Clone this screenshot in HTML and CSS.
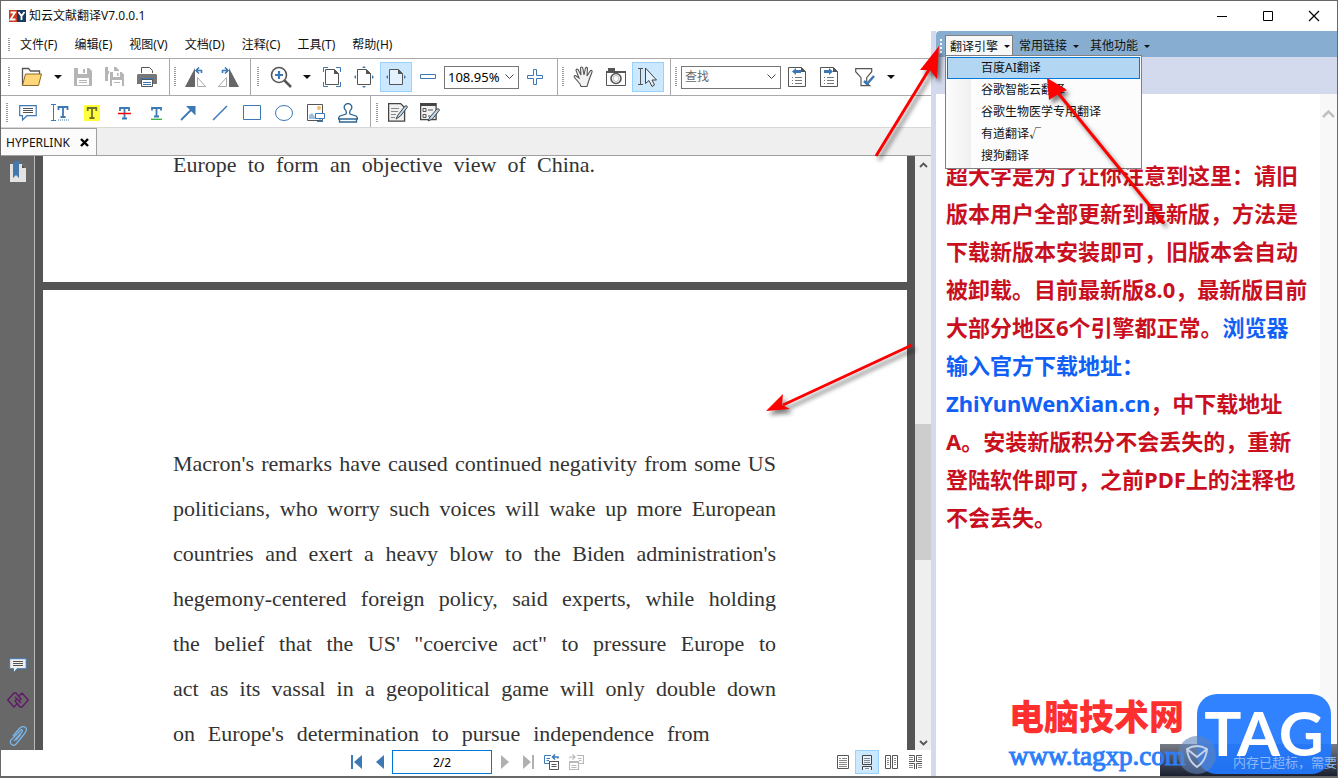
FILE: index.html
```html
<!DOCTYPE html>
<html lang="zh-CN">
<head>
<meta charset="utf-8">
<title>知云文献翻译V7.0.0.1</title>
<link rel="stylesheet" href="styles.css">
</head>
<body>
<div class="window">
  <header class="titlebar">
    <svg class="logo" width="17" height="14" viewBox="0 0 17 14"><path fill="#cf3a18" d="M0 1h8v12H0z"/><path fill="#183a63" d="M8 1h9v12H8z"/><path d="M1.500 3.500h4.500l-4.500 7h5M9.500 3l3 4 3-4M12.500 7v4" fill="none" stroke="#fff" stroke-width="1.800"/></svg>
    <h1>知云文献翻译V7.0.0.1</h1>
    <div class="caption">
      <button aria-label="最小化"><svg width="12" height="12"><path d="M1 6.500h10" stroke="#000"/></svg></button>
      <button aria-label="最大化"><svg width="12" height="12"><path d="M1.500 1.500h9v9h-9z" fill="none" stroke="#000"/></svg></button>
      <button aria-label="关闭"><svg width="12" height="12"><path d="M1 1l10 10M11 1L1 11" stroke="#000" stroke-width="1.200"/></svg></button>
    </div>
  </header>
  <div class="main">
    <section class="reader">
      <nav class="menubar">
        <span class="grip"></span>
        <button>文件(F)</button><button>编辑(E)</button><button>视图(V)</button><button>文档(D)</button><button>注释(C)</button><button>工具(T)</button><button>帮助(H)</button>
      </nav>
      <div class="toolbar">
        <div class="group">
          <span class="grip"></span>
          <button class="tool" aria-label="打开"><svg width="22" height="20" viewBox="0 0 22 20"><path d="M1.500 18.500v-17h6l2 2.500h9v3" fill="#fff" stroke="#555" stroke-width="1.300"/><path d="M1.500 18.500L4.500 7h16l-3 11.500z" fill="#ffd678" stroke="#8a6a2a"/></svg></button>
          <button class="drop" aria-label="打开选项"></button>
          <button class="tool" aria-label="保存"><svg width="18" height="20" viewBox="0 0 18 20"><path fill="#b5b5b5" d="M0 1h15l3 3v15H0z"/><path fill="#fff" d="M4 1h9v6H4zM3 11h12v7H3z"/><path fill="#b5b5b5" d="M9 2h2v4H9zM5 13h8v1H5zM5 15h8v1H5z"/></svg></button>
          <button class="tool" aria-label="全部保存"><svg width="20" height="20" viewBox="0 0 20 20"><path fill="#b5b5b5" d="M0 0h11l3 3v11H0z"/><path fill="#fff" d="M3 0h6v4H3zM3 7h8v7H3z"/><path fill="#b5b5b5" stroke="#fff" d="M4.500 4.500h12l3 3v12h-15z"/><path fill="#fff" d="M8 5h7v5H8zM7 13h10v6H7z"/><path fill="#b5b5b5" d="M12 6h1.500v3H12zM9 15h6v1H9z"/></svg></button>
          <button class="tool" aria-label="打印"><svg width="20" height="20" viewBox="0 0 20 20"><path d="M4.500 6V.5h8l3 3V6" fill="#fff" stroke="#555"/><path fill="#777" d="M1 7h18l1 1v9H0V8z"/><path fill="#3c78b4" d="M3 11h14v1H3z"/><path d="M4.500 12.500h11v7h-11z" fill="#fff" stroke="#555"/><path d="M6 15.500h8M6 17.500h8" stroke="#3c78b4"/></svg></button>
        </div>
        <div class="group tight">
          <span class="grip"></span>
          <button class="tool" aria-label="向左旋转"><svg width="22" height="20" viewBox="0 0 22 20"><path fill="#666" d="M0 20L10 1v19z"/><path d="M12.500 19.500v-9l8 9z" fill="#fff" stroke="#aaa"/><path d="M16.500 6V3.500H12M14 .5l-3 3 3 3" fill="none" stroke="#3c78b4" stroke-width="1.600"/></svg></button>
          <button class="tool" aria-label="向右旋转"><svg width="22" height="20" viewBox="0 0 22 20"><path fill="#666" d="M22 20L12 1v19z"/><path d="M9.500 19.500v-9l-8 9z" fill="#fff" stroke="#aaa"/><path d="M5.500 6V3.500H10M8 .5l3 3-3 3" fill="none" stroke="#3c78b4" stroke-width="1.600"/></svg></button>
        </div>
        <div class="group zoom">
          <span class="grip"></span>
          <button class="tool" aria-label="放大工具"><svg width="22" height="22" viewBox="0 0 22 22"><circle cx="9" cy="9" r="7.500" fill="#fff" stroke="#555" stroke-width="1.600"/><path d="M9 5v8M5 9h8" stroke="#3c78b4" stroke-width="2.200"/><path d="M14.500 14.500L21 21" stroke="#555" stroke-width="2.500"/></svg></button>
          <button class="drop" aria-label="缩放选项"></button>
          <button class="tool" aria-label="适合页面"><svg width="18" height="20" viewBox="0 0 18 20"><path d="M.5 5V.5H5M13 .5h4.500V5M.5 15v4.500H5M13 19.500h4.500V15" fill="none" stroke="#3c78b4"/><path d="M2.500 2.500h9l4 4v11h-13z" fill="#fff" stroke="#555"/><path fill="#555" d="M11 2l5 5h-5z"/></svg></button>
          <button class="tool" aria-label="实际大小"><svg width="20" height="22" viewBox="0 0 20 22"><path d="M3.500 3.500h9l4 4v11h-13z" fill="#fff" stroke="#555"/><path fill="#555" d="M12 3l5 5h-5z"/><path fill="#3c78b4" d="M8 2l2-2 2 2zM8 20l2 2 2-2zM2 9l-2 2 2 2zM18 9l2 2-2 2z"/></svg></button>
          <button class="tool on" aria-label="适合宽度"><svg width="20" height="18" viewBox="0 0 20 18"><path d="M3.500 1.500h9l4 4v11h-13z" fill="#e4f2ff" stroke="#555"/><path fill="#555" d="M12 1l5 5h-5z"/><path fill="#3c78b4" d="M2 7L0 9l2 2zM18 7l2 2-2 2z"/></svg></button>
          <button class="tool" aria-label="缩小"><svg width="16" height="6"><path d="M.5.5h15v4H.5z" fill="#fff" stroke="#3c78b4"/></svg></button>
          <label class="combo zoombox"><input aria-label="缩放比例" value="108.95%"><svg width="9" height="6"><path d="M.5.5l4 4 4-4" fill="none" stroke="#444"/></svg></label>
          <button class="tool" aria-label="放大"><svg width="16" height="16"><path d="M6.500.5h3v6h6v3h-6v6h-3v-6h-6v-3h6z" fill="#fff" stroke="#3c78b4"/></svg></button>
        </div>
        <div class="group tight">
          <span class="grip"></span>
          <button class="tool" aria-label="手形工具"><svg width="22" height="22" viewBox="0 0 22 22"><path d="M7 18L1.500 11.500q-1-2 1-2L6 12 3 4.500q0-2 2-1L8 9 7.500 2q1-2 2.300 0L11 9l1.500-7q1.500-1.500 2 .5L14 10l3.500-5.500q2-.5 1.500 1.500l-3 8-2 6.500H8z" fill="#f2f2f2" stroke="#555" stroke-width="1.100"/></svg></button>
          <button class="tool" aria-label="快照"><svg width="20" height="18" viewBox="0 0 20 18"><path d="M.5 3.500h19v14H.5z" fill="#fff" stroke="#555"/><path fill="#555" d="M2 0h7v3H2zM0 3h20v2H0z"/><circle cx="10" cy="10.500" r="5" fill="#fff" stroke="#555" stroke-width="1.600"/><circle cx="10" cy="10.500" r="3" fill="none" stroke="#bbb"/></svg></button>
          <button class="tool on" aria-label="选择文本"><svg width="20" height="20" viewBox="0 0 20 20"><path d="M0 1.500h5M0 17.500h5M2.500 1.500v16" stroke="#555" fill="none"/><path d="M7.500 1v15.500l3.500-3 3 6 2.500-1.500-2.500-5h4.500z" fill="#e4f2ff" stroke="#444"/></svg></button>
        </div>
        <div class="group tight last">
          <span class="grip"></span>
          <label class="combo findbox"><input aria-label="查找" placeholder="查找"><svg width="9" height="6"><path d="M.5.5l4 4 4-4" fill="none" stroke="#444"/></svg></label>
          <button class="tool" aria-label="查找上一个"><svg width="18" height="20" viewBox="0 0 18 20"><path d="M.5.5h13l4 4v15H.5z" fill="#fff" stroke="#555"/><path fill="#555" d="M13 0l5 5h-5z"/><path d="M4 10.500h1M7 10.500h7M4 13.500h1M7 13.500h7M4 16.500h1M7 16.500h7" stroke="#777"/><path fill="#3c78b4" d="M4 4.500L8 1v2h5v3H8v2z"/></svg></button>
          <button class="tool" aria-label="查找下一个"><svg width="18" height="20" viewBox="0 0 18 20"><path d="M.5.5h13l4 4v15H.5z" fill="#fff" stroke="#555"/><path fill="#555" d="M13 0l5 5h-5z"/><path d="M4 10.500h1M7 10.500h7M4 13.500h1M7 13.500h7M4 16.500h1M7 16.500h7" stroke="#777"/><path fill="#3c78b4" d="M13 4.500L9 1v2H4v3h5v2z"/></svg></button>
          <button class="tool filter" aria-label="筛选"><svg width="20" height="19" viewBox="0 0 20 19"><path d="M.7.700h16v3l-5 6v5.500l3 2.500H6V9.700l-5.300-6z" fill="#fff" stroke="#555" stroke-width="1.200"/><path d="M9 13l3 3 7-8" fill="none" stroke="#3c78b4" stroke-width="2.500"/></svg></button>
          <button class="drop" aria-label="筛选选项"></button>
        </div>
      </div>
      <div class="toolbar notes">
        <div class="group">
          <span class="grip"></span>
          <button class="tool" aria-label="批注"><svg width="18" height="16" viewBox="0 0 18 16"><path d="M.7.700h16.500v10H8L3.500 15v-4.300H.7z" fill="#fff" stroke="#3c78b4" stroke-width="1.200"/><path d="M4 3.500h10M4 5.500h10M4 7.500h10" stroke="#555"/></svg></button>
          <button class="tool" aria-label="文本框"><svg width="18" height="17" viewBox="0 0 18 17"><path d="M0 .5h5M0 16.500h5M2.500.5v16" stroke="#3c78b4" fill="none"/><path d="M7.500 6V3h9v3M12 3v10M9.500 13h5" stroke="#3c78b4" stroke-width="1.800" fill="none"/><path d="M7 16h11" stroke="#3c78b4" stroke-dasharray="1 1"/></svg></button>
          <button class="tool" aria-label="高亮"><svg width="16" height="16" viewBox="0 0 16 16"><path fill="#ffff3c" d="M0 0h16v16H0z"/><path d="M3.700 6V3h8.600v3M8 3v10M5.500 13h5" stroke="#6a7230" stroke-width="1.800" fill="none"/></svg></button>
          <button class="tool" aria-label="删除线"><svg width="13" height="14" viewBox="0 0 13 14"><path d="M2 5V2h9v3M6.500 2v11M4 12.500h5" stroke="#3c78b4" stroke-width="1.800" fill="none"/><path d="M0 7.500h13" stroke="#f00" stroke-width="1.500"/></svg></button>
          <button class="tool" aria-label="下划线"><svg width="13" height="14" viewBox="0 0 13 14"><path d="M2 4.500V2h9v2.500M6.500 2v9M4 10.500h5" stroke="#3c78b4" stroke-width="1.800" fill="none"/><path d="M1 13.300h11" stroke="#2fae3e" stroke-width="1.300"/></svg></button>
          <button class="tool" aria-label="箭头"><svg width="16" height="16" viewBox="0 0 16 16"><path d="M1 15L13 3" stroke="#3c78b4" stroke-width="1.800"/><path fill="#3c78b4" d="M6 1h9.500v9.500z"/></svg></button>
          <button class="tool" aria-label="直线"><svg width="16" height="16"><path d="M1 15L15 1" stroke="#3c78b4" stroke-width="1.500"/></svg></button>
          <button class="tool" aria-label="矩形"><svg width="18" height="15"><path d="M.5.5h17v14H.5z" fill="#fff" stroke="#3c78b4"/></svg></button>
          <button class="tool" aria-label="椭圆"><svg width="18" height="16"><ellipse cx="9" cy="8" rx="8.500" ry="7.500" fill="#fff" stroke="#3c78b4"/></svg></button>
          <button class="tool" aria-label="图像"><svg width="18" height="18" viewBox="0 0 18 18"><path d="M.5.5h15v16H.5z" fill="#fff" stroke="#555"/><circle cx="12" cy="4" r="2" fill="#f3bd6b"/><path fill="#9fc0dd" d="M2 15V11l3-2 5 6z"/><path d="M8.500 9.500h9v5h-9zM10 17.500h6M13 14.500v3" fill="#fff" stroke="#3c78b4"/></svg></button>
          <button class="tool" aria-label="图章"><svg width="20" height="20" viewBox="0 0 20 20"><path d="M8 11Q9 8 7 6.500a3.700 3.700 0 1 1 6 0q-2 1.500-1 4.500l6 2q1.500 1 1.500 3H.500q0-2 1.500-3zM1.500 16v3h17v-3" fill="#fff" stroke="#2d6592" stroke-width="1.300"/></svg></button>
        </div>
        <div class="group tight last">
          <span class="grip"></span>
          <button class="tool" aria-label="编辑内容"><svg width="20" height="19" viewBox="0 0 20 19"><path d="M.6.600h12l4 4v13.500H.6z" fill="#f1f1f1" stroke="#444" stroke-width="1.300"/><path d="M3 5.500h8M3 8.500h7M3 11.500h5M3 14.500h4" stroke="#888"/><path d="M8 16l2-4 7-9q2-1 2.500 1l-7 9z" fill="#bcd8ee" stroke="#444"/></svg></button>
          <button class="tool" aria-label="编辑表单"><svg width="20" height="20" viewBox="0 0 20 20"><path d="M.6.600h15.500v16H.6z" fill="#f1f1f1" stroke="#444" stroke-width="1.300"/><path d="M0 2h16" stroke="#444" stroke-width="2"/><path d="M3 5.500h3v3H3zM3 11.500h3v3H3zM8 7h5M8 13h2" fill="none" stroke="#555"/><path d="M8 18l2-4 7-8q2-1 2.500 1l-7 9z" fill="#bcd8ee" stroke="#444"/></svg></button>
        </div>
      </div>
      <div class="tabs"><div class="tab"><span>HYPERLINK</span><button aria-label="关闭标签"><svg width="9" height="9"><path d="M1 1l7 7M8 1L1 8" stroke="#000" stroke-width="2.400"/></svg></button></div></div>
      <div class="workspace">
        <aside class="side">
          <button aria-label="书签"><svg width="18" height="22" viewBox="0 0 18 22"><path d="M1 3h12l4 4v14H1z" fill="#e3e3e3"/><path fill="#555" d="M13 3l4 4h-4z"/><path fill="#4579ad" d="M4 2l2-2h6l-2 2v15l-3-3-3 3z"/></svg></button>
          <div class="side-bottom">
            <button aria-label="批注列表"><svg width="18" height="16" viewBox="0 0 18 16"><path d="M.7.700h16.500v10H8L4.500 15v-4.300H.7z" fill="#eee" stroke="#3c78b4"/><path d="M4 3.500h10M4 5.500h10M4 7.500h10" stroke="#555"/></svg></button>
            <button aria-label="超链接"><svg width="22" height="16" viewBox="0 0 22 16"><path d="M11 11L7 15 .700 8 7 1h2l5 6-2 2-4-4M11 5l4-4 6.300 7-6.300 7h-2L8 9l2-2 4 4" fill="none" stroke="#601a68" stroke-width="1.400"/></svg></button>
            <button aria-label="附件"><svg width="18" height="20" viewBox="0 0 18 20"><path d="M5 15l8-9q1-2-.500-2.500L4 12q-4 3-2 6 3 3 6-1l8-10q3-4 0-6-3-1.500-6 2l-6 7M7 14l5-6" fill="none" stroke="#79b5e8" stroke-width="1.300"/></svg></button>
          </div>
        </aside>
        <div class="document">
          <article class="page first"><p class="row short">Europe to form an objective view of China.</p></article>
          <article class="page">
            <p class="row">Macron's remarks have caused continued negativity from some US</p>
            <p class="row">politicians, who worry such voices will wake up more European</p>
            <p class="row">countries and exert a heavy blow to the Biden administration's</p>
            <p class="row">hegemony-centered foreign policy, said experts, while holding</p>
            <p class="row">the belief that the US' "coercive act" to pressure Europe to</p>
            <p class="row">act as its vassal in a geopolitical game will only double down</p>
            <p class="row tail">on Europe's determination to pursue independence from</p>
          </article>
        </div>
        <div class="scroll">
          <svg width="9" height="6"><path d="M1 5l3.500-3.500L8 5" fill="none" stroke="#555" stroke-width="1.800"/></svg>
          <div class="track"><div class="thumb"></div></div>
          <svg width="9" height="6"><path d="M1 1l3.500 3.500L8 1" fill="none" stroke="#555" stroke-width="1.800"/></svg>
        </div>
        <svg class="arrow a3" width="160" height="84" viewBox="0 0 160 84"><path d="M149 5L20 65" stroke="red" stroke-width="3"/><path fill="red" d="M3 71L20 54 19 65 27 69z"/></svg>
      </div>
      <footer class="status">
        <div class="pager">
          <button aria-label="第一页"><svg width="12" height="14"><path fill="#3c78b4" d="M0 0h2v14H0zM11 0v14L3 7z"/></svg></button>
          <button aria-label="上一页"><svg width="8" height="14"><path fill="#3c78b4" d="M8 0v14L0 7z"/></svg></button>
          <input aria-label="页码" value="2/2">
          <button aria-label="下一页"><svg width="8" height="14"><path fill="#b0b0b0" d="M0 0v14l8-7z"/></svg></button>
          <button aria-label="最后一页"><svg width="12" height="14"><path fill="#b0b0b0" d="M10 0h2v14h-2zM1 0v14l8-7z"/></svg></button>
          <button aria-label="后退"><svg width="15" height="16" viewBox="0 0 15 16"><path d="M7 1.500H.5v8H5M2.500 4.500H6M2.500 6.500H5" fill="none" stroke="#3c78b4"/><path d="M5.500 7.500h9v8h-9z" fill="#fff" stroke="#555"/><path d="M5 7.500h10M7.500 10.500h5M7.500 12.500h5" stroke="#555"/><path d="M14 4.500V3H9M11 .5L8.500 3 11 5.500" fill="none" stroke="#3c78b4" stroke-width="1.500"/></svg></button>
          <button aria-label="前进"><svg width="15" height="16" viewBox="0 0 15 16"><path d="M8 1.500h6.500v8H10M9 4.500h3.500M10 6.500h2.500M.5 7.500h9v8h-9zM0 8.500h10M2.500 11.500h5M2.500 13.500h5M1 4.500V3h5M3.500.5L6 3 3.500 5.500" fill="none" stroke="#b8b8b8" stroke-width="1.200"/></svg></button>
        </div>
        <div class="views">
          <button aria-label="单页"><svg width="12" height="14"><path d="M.5.5h11v13H.5z" fill="#fff" stroke="#555"/><path d="M2 3.500h2M5 3.500h5M2 5.500h8M2 7.500h8M2 9.500h8M2 11.500h8" stroke="#888"/></svg></button>
          <button class="on" aria-label="连续"><svg width="12" height="15"><path d="M1.500.5h9v9h-9zM1.500 15v-3.500h9V15" fill="#e4f2ff" stroke="#444"/><path d="M3 3.500h6M3 5.500h6M3 7.500h6M4 13.500h4" stroke="#888"/></svg></button>
          <button aria-label="双页"><svg width="13" height="14"><path d="M.5.5h5v13h-5zM7.500.5h5v13h-5z" fill="#fff" stroke="#555"/><path d="M2 3.500h2M2 5.500h2M2 7.500h2M2 9.500h2M9 3.500h2M9 5.500h2M9 7.500h2M9 9.500h2" stroke="#888"/></svg></button>
          <button aria-label="双页连续"><svg width="13" height="14"><path d="M0 .5h5.500v6H0M13 .5H7.500v6H13M0 8.500h5.500V14M13 8.500H7.500V14" fill="none" stroke="#555"/><path d="M0 2.500h4M0 4.500h4M9 2.500h4M9 4.500h4M0 10.500h4M0 12.500h4M9 10.500h4M9 12.500h4" stroke="#888"/></svg></button>
        </div>
      </footer>
    </section>
    <section class="translator">
      <nav class="engines">
        <span class="grip light"></span>
        <button class="engine open">翻译引擎</button><button class="engine">常用链接</button><button class="engine">其他功能</button>
      </nav>
      <div class="band"></div>
      <div class="result">
        <p class="notice">超大字是为了让你注意到这里：请旧<br>版本用户全部更新到最新版，方法是<br>下载新版本安装即可，旧版本会自动<br>被卸载。目前最新版8.0，最新版目前<br>大部分地区6个引擎都正常。<a href="#">浏览器<br>输入官方下载地址：<br>ZhiYunWenXian.cn</a>，中下载地址<br>A。安装新版积分不会丢失的，重新<br>登陆软件即可，之前PDF上的注释也<br>不会丢失。</p>
        <div class="gutter"><svg width="13" height="9"><path d="M1 8l5.500-5.500L12 8" fill="none" stroke="#c0c0c0" stroke-width="2.500"/></svg></div>
      </div>
      <div class="menu">
        <button class="sel">百度AI翻译</button><button>谷歌智能云翻译</button><button>谷歌生物医学专用翻译</button><button>有道翻译√</button><button>搜狗翻译</button>
      </div>
      <svg class="arrow a1" width="80" height="120" viewBox="0 0 80 120"><path d="M6 116L60 28" stroke="red" stroke-width="3"/><path fill="red" d="M69 6L67 39 60 30 50 30z"/></svg>
      <svg class="arrow a2" width="130" height="156" viewBox="0 0 130 156"><path d="M122 150L16 20" stroke="red" stroke-width="3"/><path fill="red" d="M5 5L25 17 18 20 7 27z"/></svg>
    </section>
  </div>
  <div class="watermark">
    <div class="shade"></div>
    <div class="site"><strong>电脑技术网</strong><span>www.tagxp.com</span></div>
    <div class="tag">TAG</div>
    <div class="toast"><svg width="40" height="42" viewBox="0 0 40 42"><circle cx="20" cy="21" r="19" fill="#5f83bd" opacity="0.6"/><path d="M10 15q10-6 20 0-1 12-10 18Q11 27 10 15zM10 15l10 8 10-8" fill="none" stroke="#c5d3ea" stroke-width="2"/></svg><span>内存已超标，需要</span></div>
  </div>
</div>
</body>
</html>
```
FILE: styles.css
```css
* { box-sizing: border-box; }
body {
  margin: 0;
  font: 12px/16px "Noto Sans", "Noto Sans CJK SC", sans-serif;
  color: #111;
}
button {
  display: flex;
  align-items: center;
  justify-content: center;
  padding: 0;
  border: 0;
  background: none;
  font: inherit;
  color: inherit;
}
input { font: inherit; min-width: 0; outline: 0; }
svg { flex: none; display: block; }
p, h1 { margin: 0; }

.window {
  position: relative;
  display: flex;
  flex-direction: column;
  height: 100vh;
  overflow: hidden;
  border: 1px solid #686868;
  border-bottom-width: 2px;
  background: #fff;
}
.titlebar { display: flex; align-items: center; height: 30px; padding-left: 8px; gap: 3px; flex: none; }
.titlebar h1 { flex: 1; font-size: 12px; font-weight: 400; }
.caption { display: flex; height: 100%; }
.caption button { width: 46px; }

.main { display: flex; flex: 1; min-height: 0; }
.reader { display: flex; flex-direction: column; flex: 1; min-width: 0; }

.grip { flex: none; width: 15px; align-self: stretch; display: flex; align-items: center; justify-content: center; }
.grip::before {
  content: "";
  width: 2px;
  height: 20px;
  background: repeating-linear-gradient(#9a9a9a 0 1px, #fff 1px 2px);
}
.menubar { display: flex; align-items: center; gap: 17px; height: 28px; flex: none; border-bottom: 1px solid #a9a9ae; }
.menubar .grip { margin-right: -13px; }
.menubar .grip::before { height: 14px; }

.toolbar { display: flex; flex: none; height: 37px; border-bottom: 1px solid #a9a9ae; }
.group { display: flex; align-items: center; padding-right: 6px; border-right: 1px solid #a9a9ae; }
.group.tight .grip { width: 10px; }
.group.zoom .grip { width: 14px; }
.group.last { border-right: 0; }
.tool { width: 32px; height: 30px; border: 1px solid transparent; }
.tool.on, .views .on { border-color: #99d1ff; background: #cce8ff; }
.filter { margin-left: 4px; }
.drop { width: 19px; height: 30px; }
.drop::before, .engine::after {
  content: "";
  border: 4px solid transparent;
  border-top-color: #111;
  border-bottom: 0;
}
.combo { display: flex; align-items: center; height: 23px; padding: 0 4px 0 3px; border: 1px solid #767676; }
.combo input { flex: 1; width: 0; padding: 0; border: 0; background: none; }
.combo input::placeholder { color: #666; }
.zoombox { width: 75px; font-size: 13px; }
.findbox { width: 100px; }
.notes { height: 32px; border-bottom-color: #d8d8d8; }
.notes .group { padding-top: 2px; }
.notes .grip { width: 11px; }
.notes .group.last .grip { width: 11px; }

.tabs { flex: none; display: flex; height: 28px; background: #efefef; border-bottom: 1px solid #a0a0a0; }
.tab { display: flex; align-items: center; gap: 10px; padding: 1px 7px 0 5px; background: #fbfbfb; border: 1px solid #a0a0a0; border-width: 1px 1px 0 0; }

.workspace { position: relative; display: flex; flex: 1; min-height: 0; background: #555; }
.side { display: flex; flex-direction: column; justify-content: space-between; width: 34px; padding: 5px 0 4px; background: #686868; border-right: 1px solid #bbb; }
.side-bottom { display: flex; flex-direction: column; gap: 18px; }
.side button { width: 100%; }
.document { flex: 1; display: flex; flex-direction: column; gap: 8px; margin: 0 8px; min-width: 0; overflow: hidden; }
.page { flex: 1 0 auto; padding: 151px 131px 0 130px; background: #fff; }
.page.first { flex: none; height: 126px; padding-top: 0; }
.row {
  height: 45px;
  font: 22px/45px "Liberation Serif", serif;
  color: #333;
  white-space: nowrap;
  text-align-last: justify;
}
.row.tail { width: 89%; }
.row.short { width: 70%; height: 18px; line-height: 18px; }
.scroll { width: 16px; display: flex; flex-direction: column; align-items: center; justify-content: space-between; padding: 6px 0 4px; background: #efefef; }
.track { flex: 1; width: 100%; padding-top: 256px; }
.thumb { height: 136px; background: #cdcdcd; }

.status { display: flex; justify-content: space-between; flex: none; height: 26px; padding: 0 4px 2px 349px; }
.pager { display: flex; align-items: center; gap: 10px; }
.pager button { min-width: 13px; }
.pager input { width: 100px; height: 24px; margin: 0 -4px; border: 1px solid #0078d7; text-align: center; padding: 0; }
.views { display: flex; }
.views button { width: 24px; border: 1px solid transparent; }

.translator { position: relative; display: flex; flex-direction: column; flex: 0 0 406px; border-left: 5px solid #d4daee; }
.engines { display: flex; align-items: center; flex: none; height: 26px; padding-top: 4px; background: #87aed0; border-radius: 4px 0 0 0; }
.grip.light { width: 9px; }
.grip.light::before { height: 15px; background: repeating-linear-gradient(#fff 0 2px, #87aed0 2px 4px); }
.engine { gap: 6px; height: 22px; padding: 0 4px 0 5px; border: 1px solid transparent; white-space: nowrap; }
.engine.open { padding: 0 2px 0 4px; background: #f8f8f8; border-color: #808080; border-bottom: 0; }
.engine::after { border-width: 3px 3px 0; }
.band { flex: none; height: 37px; background: #d4daee; }
.result { display: flex; flex: 1; min-height: 0; justify-content: space-between; }
.notice { padding: 62px 0 0 10px; font-size: 22px; font-weight: 700; line-height: 38px; color: #c9101f; white-space: nowrap; }
.notice a { color: #1060f5; text-decoration: none; }
.gutter { width: 17px; padding: 15px 2px; background: #f8f8f8; }
.menu { position: absolute; left: 9px; top: 24px; width: 197px; padding: 1px; border: 1px solid #808080; background: linear-gradient(90deg, #fcfcfc, #f0f0f0 25px, #fcfcfc 25px); }
.menu button { width: 100%; height: 22px; padding-left: 33px; justify-content: flex-start; border: 1px solid transparent; }
.menu .sel { background: #b3d7f3; border-color: #0078d7; }

.arrow { position: absolute; overflow: visible; filter: drop-shadow(3px 4px 2px rgba(0, 0, 0, 0.5)); }
.a1 { left: -66px; top: 9px; }
.a2 { left: 106px; top: 42px; }
.a3 { right: 8px; top: 184px; }

.watermark { position: absolute; right: 0; bottom: 0; width: 330px; height: 84px; pointer-events: none; }
.shade { position: absolute; right: 0; bottom: 0; width: 177px; height: 32px; background: linear-gradient(#777b86, #1a2030); }
.site { position: absolute; left: 2px; bottom: 0; display: flex; flex-direction: column; }
.site strong { font: 900 35px/43px "Noto Sans CJK SC", sans-serif; color: #fd302f; }
.site span { font: 27px/40px "Liberation Serif", serif; color: #2d7ff9; -webkit-text-stroke: 1px #2d7ff9; }
.tag { position: absolute; right: 6px; top: 2px; width: 134px; height: 80px; border-radius: 20px; background: rgba(33, 120, 255, 0.93); color: #fff; font: 700 62px/76px Lato, sans-serif; text-align: center; }
.toast { position: absolute; right: 0; bottom: 0; width: 177px; height: 32px; display: flex; align-items: flex-end; gap: 16px; padding-left: 17px; color: #8db8f5; font-size: 13px; white-space: nowrap; }
.toast span { line-height: 28px; }
```
